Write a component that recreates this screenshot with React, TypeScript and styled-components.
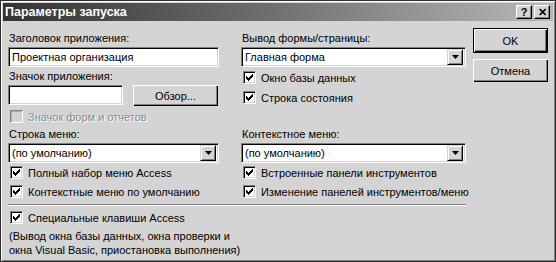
import React from "react";
import styled, { createGlobalStyle } from "styled-components";

const Global = createGlobalStyle`
  html, body { margin: 0; padding: 0; background: #d4d4d4; }
  * { box-sizing: border-box; }
`;

const FONT = `"Liberation Sans", Arial, sans-serif`;

const Window = styled.div`
  width: 556px;
  height: 262px;
  background: #d4d4d4;
  border: 1px solid #303030;
  box-shadow: inset 1px 1px 0 #ffffff, inset -1px -1px 0 #808080;
  padding: 2px;
  font-family: ${FONT};
  font-size: 11px;
  color: #000;
  display: flex;
  flex-direction: column;
  overflow: hidden;
`;

const TitleBar = styled.div`
  height: 18px;
  background: linear-gradient(to right, #333333 0%, #6a6a6a 45%, #b8b8b8 100%);
  display: flex;
  align-items: center;
  justify-content: space-between;
  padding: 0 3px 0 2px;
`;

const Title = styled.span`
  color: #fff;
  font-weight: bold;
  font-size: 12.5px;
`;

const TitleButtons = styled.div`
  display: flex;
  gap: 2px;
`;

const TitleButton = styled.div`
  width: 16px;
  height: 14px;
  background: #d4d4d4;
  border-top: 1px solid #fff;
  border-left: 1px solid #fff;
  border-right: 1px solid #000;
  border-bottom: 1px solid #000;
  box-shadow: inset -1px -1px 0 #808080;
  display: flex;
  align-items: center;
  justify-content: center;
  font-weight: bold;
  font-size: 11px;
  line-height: 1;
`;

const Body = styled.div`
  display: flex;
  padding: 7px 5px 0 5px;
  gap: 7px;
`;

const Main = styled.div`
  width: 458px;
  display: flex;
  flex-direction: column;
  padding-top: 3px;
`;

const Columns = styled.div`
  display: grid;
  grid-template-columns: 211px 225px;
  column-gap: 22px;
`;

const Column = styled.div`
  display: flex;
  flex-direction: column;
`;

const Label = styled.div<{ $mt?: number }>`
  height: 14px;
  line-height: 14px;
  white-space: nowrap;
  margin-top: ${(p) => p.$mt ?? 0}px;
  padding-left: 1px;
`;

const Sunken = styled.div<{ $w?: string; $h?: number }>`
  width: ${(p) => p.$w ?? "100%"};
  height: ${(p) => p.$h ?? 20}px;
  background: #fff;
  border-top: 1px solid #808080;
  border-left: 1px solid #808080;
  border-right: 1px solid #fff;
  border-bottom: 1px solid #fff;
  box-shadow: inset 1px 1px 0 #000, inset -1px -1px 0 #d4d4d4;
  display: flex;
  align-items: center;
  padding: 0 2px 0 3px;
  white-space: nowrap;
`;

const Field = styled(Sunken)<{ $mt?: number }>`
  margin-top: ${(p) => p.$mt ?? 2}px;
`;

const SelectText = styled.span`
  flex: 1;
`;

const DropButton = styled.div`
  width: 16px;
  height: 16px;
  background: #d4d4d4;
  border-top: 1px solid #d4d4d4;
  border-left: 1px solid #d4d4d4;
  border-right: 1px solid #000;
  border-bottom: 1px solid #000;
  box-shadow: inset 1px 1px 0 #fff, inset -1px -1px 0 #808080;
  display: flex;
  align-items: center;
  justify-content: center;
`;

const Row = styled.div<{ $mt?: number }>`
  display: flex;
  gap: 10px;
  margin-top: ${(p) => p.$mt ?? 0}px;
`;

const PushButton = styled.div<{ $w?: number; $h?: number; $default?: boolean }>`
  width: ${(p) => p.$w ?? 75}px;
  height: ${(p) => p.$h ?? (p.$default ? 25 : 23)}px;
  background: #d4d4d4;
  border: ${(p) => (p.$default ? "1px solid #000" : "none")};
  display: flex;
  align-items: center;
  justify-content: center;
  box-shadow: inset 1px 1px 0 #fff, inset -1px -1px 0 #000, inset -2px -2px 0 #808080;
`;

const CheckRow = styled.div<{ $mt?: number; $disabled?: boolean }>`
  display: flex;
  align-items: center;
  gap: 5px;
  height: 15px;
  margin-top: ${(p) => p.$mt ?? 0}px;
  padding-left: 2px;
  white-space: nowrap;
  color: ${(p) => (p.$disabled ? "#8a8a8a" : "#000")};
  text-shadow: ${(p) => (p.$disabled ? "1px 1px 0 #fff" : "none")};
`;

const Box = styled.div<{ $disabled?: boolean }>`
  width: 13px;
  height: 13px;
  flex: none;
  background: ${(p) => (p.$disabled ? "#d4d4d4" : "#fff")};
  border-top: 1px solid #808080;
  border-left: 1px solid #808080;
  border-right: 1px solid #fff;
  border-bottom: 1px solid #fff;
  box-shadow: ${(p) =>
    p.$disabled
      ? "inset 1px 1px 0 #b0b0b0"
      : "inset 1px 1px 0 #000, inset -1px -1px 0 #d4d4d4"};
  display: flex;
  align-items: center;
  justify-content: center;
`;

const Separator = styled.div`
  height: 2px;
  margin-top: 5px;
  border-top: 1px solid #808080;
  border-bottom: 1px solid #fff;
  width: 458px;
`;

const Note = styled.div`
  margin-top: 4px;
  line-height: 14px;
  padding-left: 1px;
`;

const Side = styled.div`
  display: flex;
  flex-direction: column;
  gap: 6px;
`;

const Arrow = () => (
  <svg width="7" height="4" viewBox="0 0 7 4">
    <path d="M0 0h7L3.5 4z" fill="#000" />
  </svg>
);

const Mark = () => (
  <svg width="7" height="7" viewBox="0 0 7 7" shapeRendering="crispEdges">
    <path d="M0 2h1v1h1v1h1v-1h1v-1h1v-1h1v-1h1v3h-1v1h-1v1h-1v1h-1v1h-1v-1h-1v-1h-1z" fill="#000" />
  </svg>
);

const Check: React.FC<{ label: string; mt?: number; disabled?: boolean; checked?: boolean }> = ({
  label,
  mt,
  disabled,
  checked = true,
}) => (
  <CheckRow $mt={mt} $disabled={disabled}>
    <Box $disabled={disabled}>{checked && <Mark />}</Box>
    <span>{label}</span>
  </CheckRow>
);

const Select: React.FC<{ value: string; mt?: number }> = ({ value, mt }) => (
  <Field $mt={mt}>
    <SelectText>{value}</SelectText>
    <DropButton>
      <Arrow />
    </DropButton>
  </Field>
);

export default function App() {
  return (
    <>
      <Global />
      <Window>
        <TitleBar>
          <Title>Параметры запуска</Title>
          <TitleButtons>
            <TitleButton>?</TitleButton>
            <TitleButton>✕</TitleButton>
          </TitleButtons>
        </TitleBar>
        <Body>
          <Main>
            <Columns>
              <Column>
                <Label>Заголовок приложения:</Label>
                <Field $mt={2}>Проектная организация</Field>
                <Label $mt={2}>Значок приложения:</Label>
                <Row $mt={2}>
                  <Sunken $w="115px" />
                  <PushButton $w={85} $h={21}>Обзор...</PushButton>
                </Row>
                <Check label="Значок форм и отчетов" mt={3} disabled checked={false} />
              </Column>
              <Column>
                <Label>Вывод формы/страницы:</Label>
                <Select value="Главная форма" mt={2} />
                <Check label="Окно базы данных" mt={3} />
                <Check label="Строка состояния" mt={5} />
              </Column>
            </Columns>
            <Columns>
              <Column>
                <Label $mt={3}>Строка меню:</Label>
                <Select value="(по умолчанию)" mt={2} />
                <Check label="Полный набор меню Access" mt={2} />
                <Check label="Контекстные меню по умолчанию" mt={4} />
              </Column>
              <Column>
                <Label $mt={3}>Контекстное меню:</Label>
                <Select value="(по умолчанию)" mt={2} />
                <Check label="Встроенные панели инструментов" mt={2} />
                <Check label="Изменение панелей инструментов/меню" mt={4} />
              </Column>
            </Columns>
            <Separator />
            <Check label="Специальные клавиши Access" mt={4} />
            <Note>
              (Вывод окна базы данных, окна проверки и
              <br />
              окна Visual Basic, приостановка выполнения)
            </Note>
          </Main>
          <Side>
            <PushButton $default>OK</PushButton>
            <PushButton>Отмена</PushButton>
          </Side>
        </Body>
      </Window>
    </>
  );
}
